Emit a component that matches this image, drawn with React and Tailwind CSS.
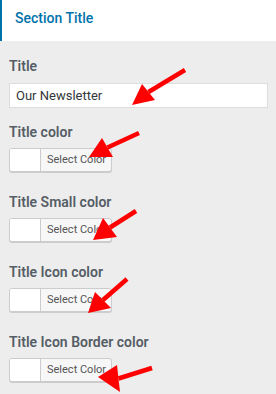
import React from "react";

const arrows = [
  { tail: [185, 70], tip: [132, 105], a: [142, 84], b: [155, 100] },
  { tail: [139, 133], tip: [89, 157], a: [102, 138], b: [113, 157] },
  { tail: [136, 211], tip: [93, 240], a: [103, 218], b: [117, 237] },
  { tail: [127, 279], tip: [88, 313], a: [95, 292], b: [111, 308] },
  { tail: [152, 368], tip: [98, 377], a: [117, 365], b: [120, 392] },
];

function ColorButton() {
  return (
    <div className="flex h-[24px] w-[103px] overflow-hidden rounded-[3px] border border-[#cccccc] bg-[#f7f7f7] shadow-[0_1px_0_#cccccc]">
      <div className="w-[31px] shrink-0 border-r border-[#cccccc] bg-white" />
      <div className="flex items-center pl-[6px] text-[11px] text-[#555555]">Select Color</div>
    </div>
  );
}

function Label({ children }) {
  return (
    <div className="h-[20px] text-[14px] leading-[20px] font-semibold text-[#555d66]">{children}</div>
  );
}

export default function App() {
  const fields = ["Title color", "Title Small color", "Title Icon color", "Title Icon Border color"];
  return (
    <div
      className="relative h-[394px] w-[276px] overflow-hidden bg-[#ededed]"
      style={{ fontFamily: "Roboto, 'Noto Sans', sans-serif" }}
    >
      <div className="h-[41px] border-l-2 border-[#0073aa] bg-white pl-[13px] pt-[8px]">
        <div className="text-[14px] leading-[20px] font-medium text-[#0073aa]">Section Title</div>
      </div>
      <div className="px-[8px] pl-[9px] pt-[15px]">
        <Label>Title</Label>
        <div className="mt-[7px] flex h-[25px] items-center border border-[#dddddd] bg-white px-[6px] text-[13px] text-[#32373c]">
          Our Newsletter
        </div>
        <div className="mt-[14px] flex flex-col gap-[20px]">
          {fields.map((f) => (
            <div key={f} className="flex flex-col gap-[6px]">
              <Label>{f}</Label>
              <ColorButton />
            </div>
          ))}
        </div>
      </div>
      <svg
        className="pointer-events-none absolute left-0 top-0"
        width="276"
        height="394"
        viewBox="0 0 276 394"
      >
        {arrows.map((ar, i) => {
          const mx = (ar.a[0] + ar.b[0]) / 2;
          const my = (ar.a[1] + ar.b[1]) / 2;
          return (
            <g key={i} fill="#ff0000" stroke="#ff0000">
              <line x1={ar.tail[0]} y1={ar.tail[1]} x2={mx} y2={my} strokeWidth="4.5" strokeLinecap="butt" />
              <polygon points={`${ar.tip[0]},${ar.tip[1]} ${ar.a[0]},${ar.a[1]} ${ar.b[0]},${ar.b[1]}`} strokeWidth="0" />
            </g>
          );
        })}
      </svg>
    </div>
  );
}
